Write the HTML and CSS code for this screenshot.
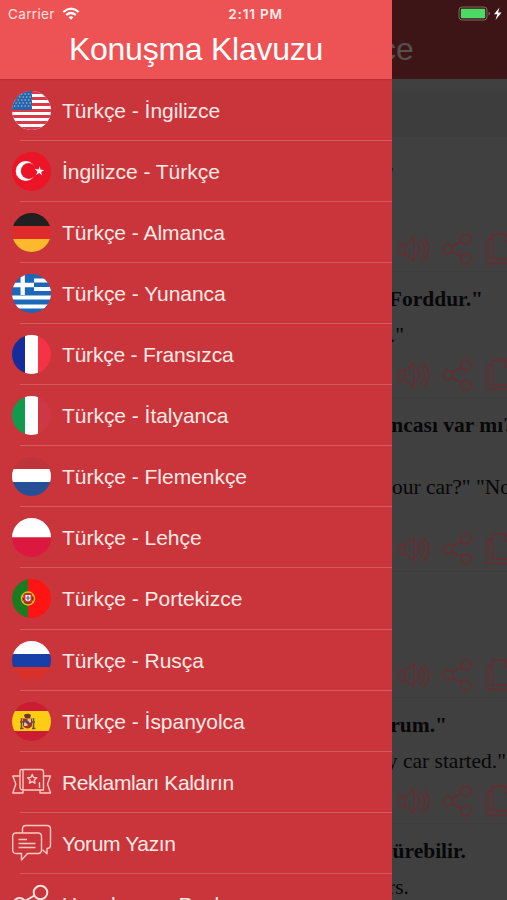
FILE: index.html
```html
<!DOCTYPE html>
<html lang="tr">
<head>
<meta charset="utf-8">
<title>Konuşma Klavuzu</title>
<link rel="stylesheet" href="styles.css">
</head>
<body>
<svg class="defs" width="0" height="0">
  <defs>
    <symbol id="sound" viewBox="0 0 32 32"><path d="M1.500 11.500H7v9.500H1.500zM7 11.500 16 4.500v23.500L7 21M19 10q5 6 0 12.500M22 7q8.500 9 0 18.500M25 4.500q11.500 11.500 0 23.500"/></symbol>
    <symbol id="share" viewBox="0 0 32 32"><circle cx="6" cy="16" r="4.800"/><circle cx="24" cy="6" r="5"/><circle cx="24" cy="26" r="5"/><path d="m10.200 13.700 9.500-5.400M10.200 18.300l9.500 5.400"/></symbol>
    <symbol id="copy" viewBox="0 0 32 32"><path d="M6.500 1H20l6 6v19H6.500zM19.500 1v7H26M6.500 6h-3q-2 0-2 2v20.500q0 2 2 2h20V26"/></symbol>
  </defs>
</svg>
<div class="app">
  <div class="status">
    <span class="carrier">Carrier
      <svg width="18" height="13" viewBox="0 0 18 13" fill="none" stroke="#fff" stroke-width="2.200"><path d="M1.300 5q7.700-6.700 15.400 0M4.200 8q4.800-4 9.600 0"/><path d="m6.600 10.200 2.400 2.500 2.400-2.500q-2.400-1.800-4.800 0z" fill="#fff" stroke="none"/></svg>
    </span>
    <span class="time">2:11 PM</span>
    <svg class="battery" width="45" height="16" viewBox="0 0 45 16"><rect x="1" y="1" width="28" height="13" rx="3" fill="none" stroke="#8a6662"/><rect x="2.800" y="2.800" width="24.400" height="9.400" rx="1.200" fill="#4cd964"/><path d="M30.500 5.500q3 2 0 4z" fill="#8a6662"/><path d="m41.500 1.500-5.500 6.700h3.300L37.500 14l6-7.500h-3.500z" fill="#fff"/></svg>
  </div>
  <nav class="drawer">
    <h1 class="title">Konuşma Klavuzu</h1>
    <ul class="menu">
      <li><svg class="flag" viewBox="0 0 39 39"><path fill="#fff" d="M0 0h39v39H0z"/><path stroke="#d83a4c" stroke-width="3" d="M0 1.500h39M0 7.500h39M0 13.500h39M0 19.500h39M0 25.500h39M0 31.500h39M0 37.500h39"/><path fill="#2764a8" d="M0 0h20v19H0z"/><path stroke="#8fb2da" stroke-width="1.300" stroke-dasharray="1.300 2.200" d="M2 3h18M0 6h20M2 9h18M0 12h20M2 15h18"/></svg><span>Türkçe - İngilizce</span></li>
      <li><svg class="flag" viewBox="0 0 39 39"><path fill="#ec1427" d="M0 0h39v39H0z"/><circle cx="13.700" cy="19" r="10" fill="#fff"/><circle cx="16.700" cy="19" r="7.900" fill="#ec1427"/><path fill="#fff" d="m27.700 14 .9 3.700 3.700.2-3.200 2 1.100 3.700-2.900-2.500-3.300 1.900 1.500-3.400-2.900-2.500 3.900.3z"/></svg><span>İngilizce - Türkçe</span></li>
      <li><svg class="flag" viewBox="0 0 39 39"><path fill="#202020" d="M0 0h39v13H0z"/><path fill="#de2b2b" d="M0 13h39v13H0z"/><path fill="#fdb92d" d="M0 26h39v13H0z"/></svg><span>Türkçe - Almanca</span></li>
      <li><svg class="flag" viewBox="0 0 39 39"><path fill="#1c68b8" d="M0 0h39v39H0z"/><path stroke="#fff" stroke-width="4" d="M22 6.500h17M22 15h17M0 23.500h39M0 32.500h39"/><path fill="#1c68b8" d="M0 0h22v21H0z"/><path stroke="#fff" stroke-width="4.300" d="M10.700 0v21M0 11h22"/></svg><span>Türkçe - Yunanca</span></li>
      <li class="snug"><svg class="flag" viewBox="0 0 39 39"><path fill="#142c9c" d="M0 0h13v39H0z"/><path fill="#fff" d="M13 0h13v39H13z"/><path fill="#f43444" d="M26 0h13v39H26z"/></svg><span>Türkçe - Fransızca</span></li>
      <li><svg class="flag" viewBox="0 0 39 39"><path fill="#109b4c" d="M0 0h13v39H0z"/><path fill="#fff" d="M13 0h13v39H13z"/><path fill="#d03744" d="M26 0h13v39H26z"/></svg><span>Türkçe - İtalyanca</span></li>
      <li><svg class="flag" viewBox="0 0 39 39"><path fill="#bd343b" d="M0 0h39v12H0z"/><path fill="#fff" d="M0 12h39v13H0z"/><path fill="#264f98" d="M0 25h39v14H0z"/></svg><span>Türkçe - Flemenkçe</span></li>
      <li><svg class="flag" viewBox="0 0 39 39"><path fill="#fff" d="M0 0h39v19.500H0z"/><path fill="#dc1840" d="M0 19.500h39V39H0z"/></svg><span>Türkçe - Lehçe</span></li>
      <li><svg class="flag" viewBox="0 0 39 39"><path fill="#1c7a20" d="M0 0h16v39H0z"/><path fill="#ff1414" d="M16 0h23v39H16z"/><circle cx="16" cy="19.500" r="6.500" fill="#8b2a16" stroke="#d8c62c" stroke-width="1.400"/><path d="M9.500 17 22 23M10 23l12-7" stroke="#d8c62c"/><path d="M12 14.500h8V22q-4 4-8 0z" fill="#e02a2a"/><path d="M13.500 16h5v5q-2.500 2.500-5 0z" fill="#fff"/><path d="M16 16.500v5M14 19h4" stroke="#3b5ba0" stroke-width="1.200"/></svg><span>Türkçe - Portekizce</span></li>
      <li><svg class="flag" viewBox="0 0 39 39"><path fill="#fff" d="M0 0h39v13H0z"/><path fill="#173fa8" d="M0 13h39v13H0z"/><path fill="#d8302a" d="M0 26h39v13H0z"/></svg><span>Türkçe - Rusça</span></li>
      <li><svg class="flag" viewBox="0 0 39 39"><path fill="#cb1c34" d="M0 0h39v39H0z"/><path fill="#fccd13" d="M0 9h39v20H0z"/><path stroke="#6d5430" stroke-width="1.600" d="M9.500 16v11M21.500 16v11M8 26.500h3.500M20 26.500h3.500M8 20h3M20 20h3"/><path fill="#a0341f" d="M11 16.500h9V24q-4.500 5-9 0z"/><path fill="#6e3535" d="M12 13q3.500-2.500 7 0l-1 3h-5z"/><path fill="#d7c6b5" d="M15.500 17h3.500v3.500h-3.500zM12 20.500h3.500V24H12z"/><circle cx="15.500" cy="20.500" r="1.400" fill="#34468a"/></svg><span>Türkçe - İspanyolca</span></li>
      <li class="tight"><svg class="glyph" viewBox="0 0 39 39"><path d="M10.500 6.500H29q2.500 0 2.500 2.500v18H11.500q-3.500 0-3.500-3V8q0-1.500 1.500-1.500T11 8v18.500M8 13H.800l3 8-3 9H11v-3M31.500 13h7l-3 8 3 9H28v-3M27.500 19v6M20.200 11.500l1.300 2.900 3.300.4-2.500 2.200.7 3.200-2.800-1.600-2.800 1.600.7-3.200-2.500-2.200 3.300-.4z"/></svg><span>Reklamları Kaldırın</span></li>
      <li class="tight"><svg class="glyph" viewBox="0 0 39 39"><path d="M10.500 9V5q0-3.500 3.500-3.500h21q3.500 0 3.500 3.500v16q0 3.500-3.500 3.500v5.300l-4.500-4M4 9h22q3.500 0 3.500 3.500V26q0 3.500-3.500 3.500H15.500L9.500 36v-6.500H4Q.700 29.500.700 26V12.500Q.700 9 4 9zM6.500 15.500h8.500M6.500 19.500h17M6.500 23.500h17"/></svg><span>Yorum Yazın</span></li>
      <li><svg class="glyph thick" viewBox="0 0 39 39"><circle cx="7.500" cy="19" r="6"/><circle cx="28.500" cy="7.500" r="6.800"/><circle cx="28.500" cy="31" r="6.800"/><path d="m13 16 9.500-5.500M13 22l9.500 5.500"/></svg><span>Uygulamayı Paylaş</span></li>
    </ul>
  </nav>
  <main class="page">
    <div class="page-title">ce</div>
    <div class="search"></div>
    <section class="cell first"><p class="bold">"</p><p class="plain"></p><div class="actions"><svg><use href="#sound"/></svg><svg><use href="#share"/></svg><svg><use href="#copy"/></svg></div></section>
    <section class="cell"><p class="bold" style="--end:24px">Forddur."</p><p class="plain" style="--end:103px">."</p><div class="actions"><svg><use href="#sound"/></svg><svg><use href="#share"/></svg><svg><use href="#copy"/></svg></div></section>
    <section class="cell tall"><p class="bold" style="--end:-7px">ncası var mı?</p><p class="plain" style="--end:-4px">our car?" "No</p><div class="actions"><svg><use href="#sound"/></svg><svg><use href="#share"/></svg><svg><use href="#copy"/></svg></div></section>
    <section class="cell"><p class="bold"></p><p class="plain"></p><div class="actions"><svg><use href="#sound"/></svg><svg><use href="#share"/></svg><svg><use href="#copy"/></svg></div></section>
    <section class="cell"><p class="bold" style="--end:60px">rum."</p><p class="plain" style="--end:1px">y car started."</p><div class="actions"><svg><use href="#sound"/></svg><svg><use href="#share"/></svg><svg><use href="#copy"/></svg></div></section>
    <section class="cell"><p class="bold" style="--end:41px">ürebilir.</p><p class="plain" style="--end:98px">rs.</p></section>
  </main>
</div>
</body>
</html>
```
FILE: styles.css
```css
* { box-sizing: border-box; }
body { margin: 0; font-family: "Liberation Sans", Arial, sans-serif; }
.defs { display: block; }
.app { position: relative; display: flex; width: 507px; height: 900px; overflow: hidden; background: #404040; }

.status { position: absolute; inset: 0 0 auto; z-index: 2; height: 27px; padding: 0 4px 0 8px; display: grid; grid-template-columns: 1fr auto 1fr; align-items: center; color: #fff; font-family: Inter, "Liberation Sans", sans-serif; font-size: 13.5px; }
.carrier { display: flex; align-items: center; gap: 7px; color: #ffe3df; letter-spacing: .35px; }
.time { font-weight: 600; font-size: 13.5px; letter-spacing: .8px; color: #ffecea; }
.battery { justify-self: end; }

.drawer { width: 392px; flex: none; background: #c9353b; }
.title { margin: 0; height: 79px; padding-top: 30px; background: #ed5354; color: #fff; font-size: 32px; letter-spacing: -.25px; line-height: 38px; font-weight: 400; text-align: center; box-shadow: 0 1px 1px #b92f35; }
.menu { list-style: none; margin: 0; padding: .8px 0 0; }
.menu li { height: 61.08px; padding: 0 0 0 12px; display: flex; align-items: center; gap: 11px; color: #ffeae5; font-size: 21px; letter-spacing: -.03px; background: linear-gradient(#d4595d, #d4595d) right bottom / calc(100% - 20px) 1px no-repeat; }
.menu span { padding-top: 1px; }
.menu .snug { letter-spacing: -.2px; }
.menu .tight { letter-spacing: -.36px; }
.flag { width: 39px; height: 39px; border-radius: 50%; flex: none; }
.glyph { width: 39px; height: 39px; flex: none; fill: none; stroke: #ffc9c0; stroke-width: 1.4; stroke-linejoin: round; overflow: visible; }
.thick { stroke-width: 2; stroke: #ffe3dc; }

.page { flex: 1; min-width: 0; overflow: hidden; font-family: "Liberation Serif", "Times New Roman", serif; color: #080808; }
.page-title { height: 79px; padding-top: 30px; background: #3d1516; color: #55504c; font: 32px/38px "Liberation Sans", sans-serif; text-indent: -12px; }
.search { height: 45px; margin-top: 13px; background: #3d3d3d; }
.cell { height: 126px; display: flex; flex-direction: column; border-bottom: 1px solid #3d3d3d; font-size: 21.5px; }
.cell.first { height: 135px; }
.cell.tall { height: 174px; }
.cell p { margin: 0; display: flex; justify-content: flex-end; white-space: nowrap; line-height: 24px; height: 24px; transform: translateX(calc(var(--end, 112px) * -1)); }
.bold { font-weight: 700; }
.cell .bold { margin-top: 15px; }
.cell .plain { margin-top: 12px; }
.first .bold { margin-top: 26px; }
.cell.tall .plain { margin-top: 38px; }
.actions { margin-top: auto; height: 45px; padding-left: 6px; display: flex; align-items: center; gap: 12px; }
.actions svg { width: 32px; height: 32px; flex: none; fill: none; stroke: #692a30; stroke-width: 1.4; }
```
